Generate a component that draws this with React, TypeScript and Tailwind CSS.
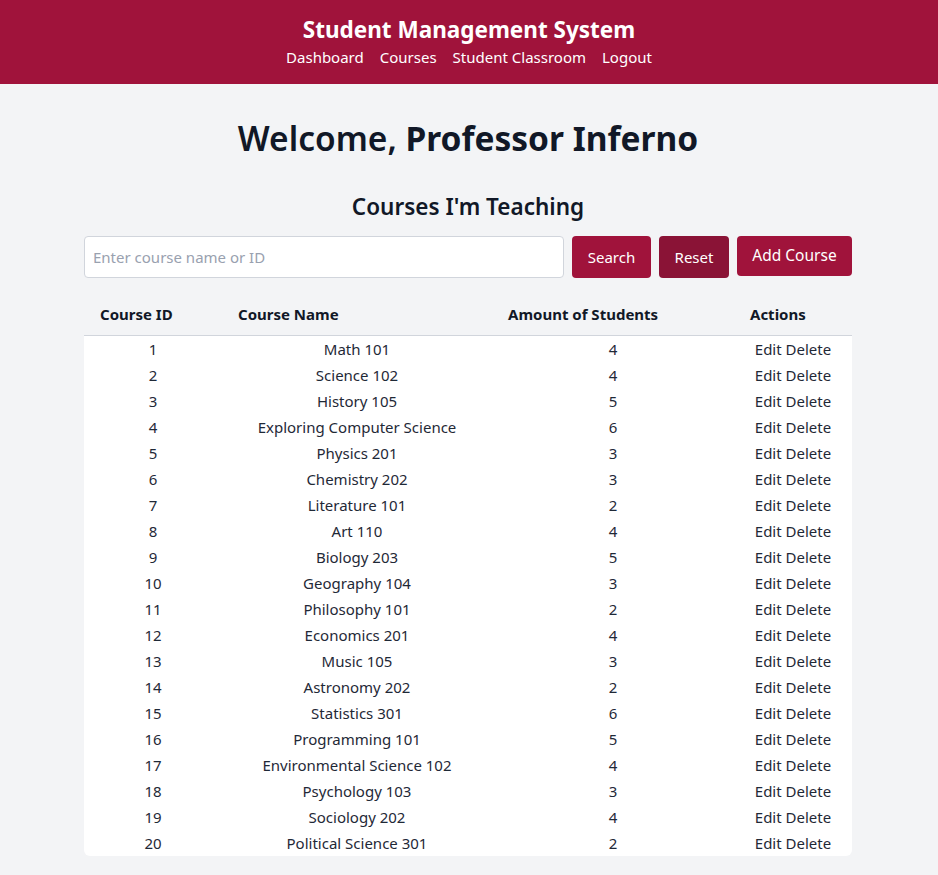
import { useState } from 'react';

const courses = [
  { id: 1, name: 'Math 101', students: 4 },
  { id: 2, name: 'Science 102', students: 4 },
  { id: 3, name: 'History 105', students: 5 },
  { id: 4, name: 'Exploring Computer Science', students: 6 },
  { id: 5, name: 'Physics 201', students: 3 },
  { id: 6, name: 'Chemistry 202', students: 3 },
  { id: 7, name: 'Literature 101', students: 2 },
  { id: 8, name: 'Art 110', students: 4 },
  { id: 9, name: 'Biology 203', students: 5 },
  { id: 10, name: 'Geography 104', students: 3 },
  { id: 11, name: 'Philosophy 101', students: 2 },
  { id: 12, name: 'Economics 201', students: 4 },
  { id: 13, name: 'Music 105', students: 3 },
  { id: 14, name: 'Astronomy 202', students: 2 },
  { id: 15, name: 'Statistics 301', students: 6 },
  { id: 16, name: 'Programming 101', students: 5 },
  { id: 17, name: 'Environmental Science 102', students: 4 },
  { id: 18, name: 'Psychology 103', students: 3 },
  { id: 19, name: 'Sociology 202', students: 4 },
  { id: 20, name: 'Political Science 301', students: 2 },
];

export default function App() {
  const [query, setQuery] = useState('');

  return (
    <div className="min-h-screen bg-[#f3f4f6] text-[#111827] font-['Segoe_UI','Noto_Sans',sans-serif]">
      <header className="bg-[#a0133b] text-white pt-3.5 pb-[15px] text-center">
        <h1 className="text-[22.5px] font-bold leading-8">Student Management System</h1>
        <nav className="flex justify-center gap-4 -mt-px text-[15px] leading-6">
          <a href="#">Dashboard</a>
          <a href="#">Courses</a>
          <a href="#">Student Classroom</a>
          <a href="#">Logout</a>
        </nav>
      </header>

      <main className="w-[768px] ml-[84px] pt-[34px] pb-5">
        <h1 className="text-[33.5px] leading-10 font-semibold text-center mb-[33px]">
          Welcome, <span className="font-bold">Professor Inferno</span>
        </h1>
        <h2 className="text-[22.5px] leading-8 font-semibold text-center mb-[13px]">Courses I'm Teaching</h2>

        <div className="flex items-start gap-2 mb-4">
          <input
            value={query}
            onChange={(e) => setQuery(e.target.value)}
            placeholder="Enter course name or ID"
            className="flex-1 min-w-0 h-[42px] px-2 bg-white border border-gray-300 rounded text-[15px] placeholder:text-gray-400 outline-none"
          />
          <button className="shrink-0 whitespace-nowrap w-[79px] h-[42px] rounded bg-[#a0133b] text-white text-[15px]">Search</button>
          <button className="shrink-0 whitespace-nowrap w-[70px] h-[42px] rounded bg-[#8a1336] text-white text-[15px]">Reset</button>
          <button className="shrink-0 whitespace-nowrap w-[115px] h-10 rounded bg-[#a0133b] text-white text-[15.5px]">Add Course</button>
        </div>

        <table className="w-full border-collapse text-[15px]">
          <thead>
            <tr className="border-b border-gray-300">
              <th className="w-[138px] px-4 pt-2 pb-[9px] text-left font-bold leading-6">Course ID</th>
              <th className="w-[270px] px-4 pt-2 pb-[9px] text-left font-bold leading-6">Course Name</th>
              <th className="w-[242px] px-4 pt-2 pb-[9px] text-left font-bold leading-6">Amount of Students</th>
              <th className="w-[118px] px-4 pt-2 pb-[9px] text-left font-bold leading-6">Actions</th>
            </tr>
          </thead>
          <tbody className="bg-white">
            {courses.map((c, i) => (
              <tr key={c.id} className="text-center text-[15px] leading-6 text-[#1f2937]">
                <td className={`py-px ${i === courses.length - 1 ? 'rounded-bl-md' : ''}`}>{c.id}</td>
                <td className="py-px">{c.name}</td>
                <td className="py-px">{c.students}</td>
                <td className={`py-px ${i === courses.length - 1 ? 'rounded-br-md' : ''}`}>
                  <button>Edit</button> <button>Delete</button>
                </td>
              </tr>
            ))}
          </tbody>
        </table>
      </main>
    </div>
  );
}
